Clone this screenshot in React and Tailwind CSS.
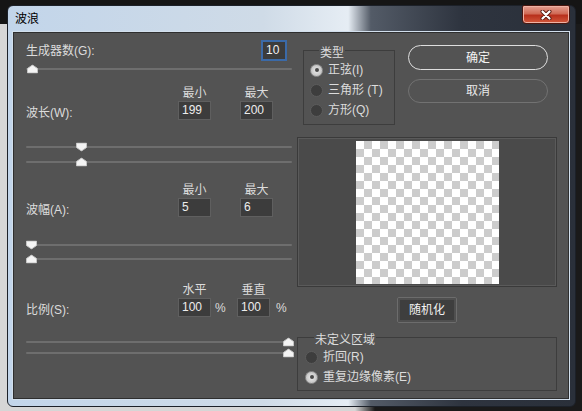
import React from "react";

const sans = "font-['Liberation_Sans','Noto_Sans_CJK_SC',sans-serif]";

// thumb left offset in px, track is 266px wide
const thumbLeft = (v, max) => 4 + ((v - 1) / (max - 1)) * 258 - 5.5;

function Thumb({ dir }) {
  const pts =
    dir === "up"
      ? "5.5,0.5 10.5,4 10.5,8.5 0.5,8.5 0.5,4"
      : "0.5,0.5 10.5,0.5 10.5,5 5.5,8.5 0.5,5";
  return (
    <svg width="11" height="9" viewBox="0 0 11 9" className="block">
      <polygon points={pts} fill="#f4f4f4" stroke="#c4c4c4" strokeWidth="1" />
    </svg>
  );
}

function Slider({ value, max, dir, className }) {
  return (
    <div className={`relative flex items-center ${className}`}>
      <div className="h-[2px] w-full rounded-full bg-[#6e6e6e]" />
      <div
        className="absolute top-1/2 -translate-y-1/2"
        style={{ left: thumbLeft(value, max) }}
      >
        <Thumb dir={dir} />
      </div>
    </div>
  );
}

function Field({ value }) {
  return (
    <div className="h-[19px] w-[33px] border border-[#5f5f5f] bg-[#3c3c3c] pl-[3px] leading-[17px] text-[#ededed]">
      {value}
    </div>
  );
}

function Col({ title, value }) {
  return (
    <div className="flex w-[33px] flex-col items-center">
      <div className="h-[14px] whitespace-nowrap leading-[12px]">{title}</div>
      <Field value={value} />
    </div>
  );
}

function Radio({ checked, label }) {
  return (
    <div className="flex h-[20px] items-center gap-[5px]">
      <span
        className={`flex h-[13px] w-[13px] items-center justify-center rounded-full border ${
          checked
            ? "border-[#8e8e8e] bg-[radial-gradient(circle,#ececec_0,#b4b4b4_100%)]"
            : "border-[#5c5c5c] bg-[#3d3d3d]"
        }`}
      >
        {checked && <span className="h-[4px] w-[4px] rounded-full bg-[#4a4a4a]" />}
      </span>
      <span className="whitespace-nowrap">{label}</span>
    </div>
  );
}

export default function App() {
  return (
    <div
      className={`h-[411px] w-[582px] overflow-hidden bg-[linear-gradient(to_bottom,#151515_0_24px,transparent_24px),linear-gradient(to_right,#d6d6d6_0_355px,#1a1a1a_375px)] pl-[7px] pt-[5px] text-[12px] ${sans}`}
    >
      {/* window frame */}
      <div className="flex h-[402px] w-[569px] flex-col rounded-[6px] border border-[#1c2129] bg-[linear-gradient(to_right,#c2d5ea_0%,#cfdbe7_45%,#e6edf4_60%,#535b67_64%,#2e343f_80%,#2a303a_100%)] pb-[7px] pl-[5px] pr-[6px]">
        {/* title bar */}
        <div className="flex h-[26px] items-start justify-between">
          <div className="pl-[2px] pt-[6px] leading-[14px] text-black">波浪</div>
          <div className="-mr-[1px] -mt-[1px] flex h-[19px] w-[48px] items-center justify-center rounded-b-[4px] rounded-t-[2px] border border-[#4a1710] bg-[linear-gradient(to_bottom,#e4a092_0%,#d06a55_45%,#b8301c_55%,#d2593c_100%)] shadow-[inset_0_0_0_1px_#eeb2a4]">
            <svg width="12" height="10" viewBox="0 0 12 10">
              <path d="M2.5 1.5 L9.5 8.5 M9.5 1.5 L2.5 8.5" stroke="#5a1a10" strokeWidth="4" strokeLinecap="round" />
              <path d="M2.5 1.5 L9.5 8.5 M9.5 1.5 L2.5 8.5" stroke="#ffffff" strokeWidth="2.2" strokeLinecap="round" />
            </svg>
          </div>
        </div>

        {/* client area */}
        <div className="flex h-[367px] w-[556px] border border-[#2e2e2e] bg-[#535353] text-[#dcdcdc] shadow-[0_0_0_1px_#d2dfec]">
          {/* left column */}
          <div className="ml-[12px] flex w-[266px] flex-col">
            <div className="mt-[7px] flex h-[21px] items-center justify-between pr-[5px]">
              <span className="leading-[14px]">生成器数(G):</span>
              <div className="h-[21px] w-[26px] border-2 border-[#3b6aa8] bg-[#3c3c3c] pl-[3px] leading-[17px] text-[#f2f2f2]">
                10
              </div>
            </div>
            <Slider value={10} max={999} dir="up" className="mt-[1px] h-[14px]" />

            <div className="mt-[11px] flex items-end">
              <div className="w-[152px] leading-[14px]">波长(W):</div>
              <Col title="最小" value="199" />
              <div className="w-[29px]" />
              <Col title="最大" value="200" />
            </div>
            <Slider value={199} max={999} dir="down" className="mt-[20px] h-[14px]" />
            <Slider value={200} max={999} dir="up" className="h-[16px]" />

            <div className="mt-[14px] flex items-end">
              <div className="w-[152px] leading-[14px]">波幅(A):</div>
              <Col title="最小" value="5" />
              <div className="w-[29px]" />
              <Col title="最大" value="6" />
            </div>
            <Slider value={5} max={999} dir="down" className="mt-[21px] h-[14px]" />
            <Slider value={6} max={999} dir="up" className="h-[14px]" />

            <div className="mt-[18px] flex items-end">
              <div className="w-[152px] leading-[14px]">比例(S):</div>
              <Col title="水平" value="100" />
              <div className="w-[26px] pl-[4px] leading-[17px]">%</div>
              <Col title="垂直" value="100" />
              <div className="pl-[6px] leading-[17px]">%</div>
            </div>
            <Slider value={100} max={100} dir="up" className="mt-[18px] h-[14px]" />
            <Slider value={100} max={100} dir="up" className="h-[8px]" />
          </div>

          {/* right column */}
          <div className="ml-[5px] flex w-[260px] flex-col">
            <div className="mt-[10px] flex items-start">
              <fieldset className="ml-[6px] h-[82px] w-[92px] border border-[#3d3d3d] pl-[6px] pt-[3px]">
                <legend className="relative top-[3px] ml-[9px] px-[1px] leading-[14px]">类型</legend>
                <Radio checked label="正弦(I)" />
                <Radio label="三角形 (T)" />
                <Radio label="方形(Q)" />
              </fieldset>
              <div className="ml-auto mr-[9px] mt-[2px] flex flex-col gap-[9px]">
                <button className="h-[25px] w-[140px] rounded-full border-[1.5px] border-[#dedede] text-[#f4f4f4]">
                  确定
                </button>
                <button className="h-[24px] w-[140px] rounded-full border-[1.5px] border-[#727272] text-[#eaeaea]">
                  取消
                </button>
              </div>
            </div>

            {/* preview */}
            <div className="mt-[12px] flex h-[150px] w-[260px] items-center justify-center border border-[#3a3a3a] bg-[#4a4a4a] shadow-[inset_0_0_0_1px_#5a5a5a]">
              <div className="h-[143px] w-[143px] bg-[repeating-conic-gradient(#cccccc_0_25%,#ffffff_0_50%)] bg-[length:16px_16px]" />
            </div>

            <div className="mt-[10px] flex justify-center">
              <button className="h-[26px] w-[60px] rounded-[2px] border border-[#6c6c6c] bg-[#3e3e3e] text-[#f2f2f2] shadow-[inset_0_0_0_2px_#4f4f4f]">
                随机化
              </button>
            </div>

            <fieldset className="mt-[7px] h-[61px] w-[260px] border border-[#3d3d3d] pl-[7px] pt-[3px]">
              <legend className="relative top-[3px] ml-[9px] px-[1px] leading-[14px]">未定义区域</legend>
              <Radio label="折回(R)" />
              <Radio checked label="重复边缘像素(E)" />
            </fieldset>
          </div>
        </div>
      </div>
    </div>
  );
}
